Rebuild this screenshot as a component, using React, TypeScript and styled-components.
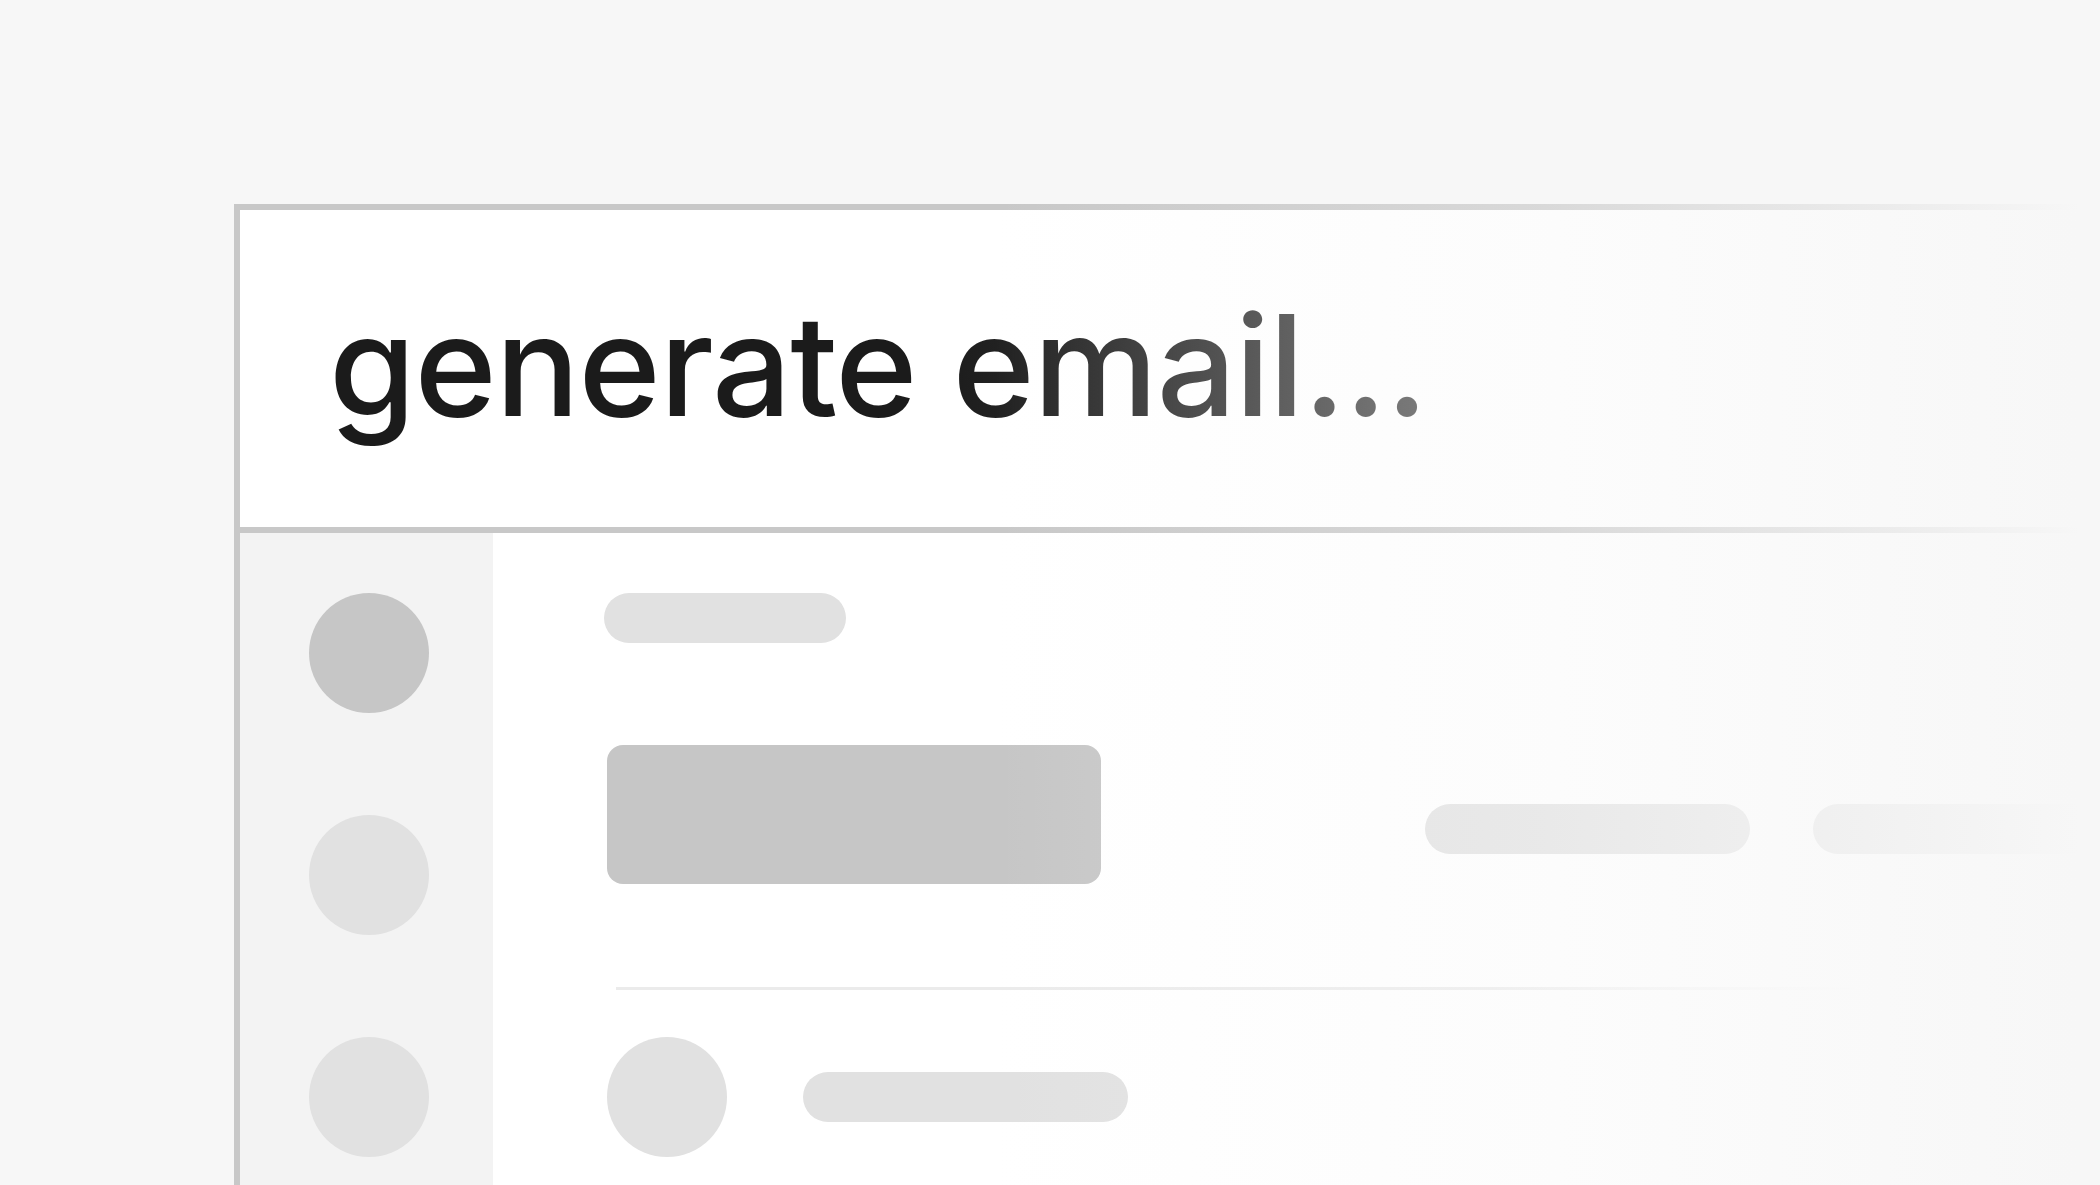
import React from 'react';
import styled, { createGlobalStyle } from 'styled-components';

const GlobalStyle = createGlobalStyle`
  *, *::before, *::after {
    box-sizing: border-box;
  }

  html, body {
    margin: 0;
    padding: 0;
    background-color: #f7f7f7;
  }

  body {
    font-family: Inter, "Liberation Sans", sans-serif;
  }
`;

const Page = styled.main`
  height: 1185px;
  overflow: hidden;
  padding: 204px 0 0 234px;
  background-color: #f7f7f7;
`;

const Frame = styled.section`
  position: relative;
  display: flex;
  flex-direction: column;
  width: 1866px;
  height: 981px;
  background-color: #ffffff;
  border-top: 6px solid #c8c8c8;
  border-left: 6px solid #c8c8c8;
`;

// soft fade of the whole window into the page on the right
const Fade = styled.div`
  position: absolute;
  top: -6px;
  right: 0;
  bottom: 0;
  left: -6px;
  pointer-events: none;
  background: linear-gradient(
    90deg,
    rgba(247, 247, 247, 0) 760px,
    rgba(247, 247, 247, 0.35) 1300px,
    rgba(247, 247, 247, 0.75) 1650px,
    #f7f7f7 1845px
  );
`;

const Header = styled.header`
  flex: none;
  height: 323px;
  padding: 65px 0 0 89px;
  border-bottom: 6px solid #c8c8c8;
`;

const Prompt = styled.h1`
  margin: 0;
  display: inline-block;
  font-family: Inter, "Liberation Sans", sans-serif;
  font-size: 140px;
  font-weight: 500;
  line-height: 180px;
  letter-spacing: -1.2px;
  background: linear-gradient(90deg, #1b1b1b 0%, #1b1b1b 55%, #4a4a4a 100%);
  -webkit-background-clip: text;
  background-clip: text;
  color: transparent;
`;

const Body = styled.div`
  flex: 1;
  display: flex;
  min-height: 0;
`;

const Sidebar = styled.aside`
  flex: none;
  width: 253px;
  display: flex;
  flex-direction: column;
  gap: 102px;
  padding: 60px 0 0 69px;
  background-color: #f3f3f3;
`;

const Avatar = styled.div<{ $tone?: 'dark' | 'light' }>`
  flex: none;
  width: 120px;
  height: 120px;
  border-radius: 50%;
  background-color: ${(p) => (p.$tone === 'dark' ? '#c6c6c6' : '#e1e1e1')};
`;

const Content = styled.div`
  flex: 1;
  display: flex;
  flex-direction: column;
  padding: 60px 0 0 111px;
`;

const Pill = styled.div<{ $width: number }>`
  flex: none;
  width: ${(p) => p.$width}px;
  height: 50px;
  border-radius: 25px;
  background-color: #e1e1e1;
`;

const Row = styled.div`
  display: flex;
  margin-top: 102px;
`;

const Block = styled.div`
  flex: none;
  width: 494px;
  height: 139px;
  margin-left: 3px;
  border-radius: 16px;
  background-color: #c6c6c6;
`;

const PillGroup = styled.div`
  display: flex;
  gap: 63px;
  margin-left: 324px;
  padding-top: 59px;
`;

const Rule = styled.hr`
  width: 1254px;
  height: 3px;
  margin: 103px 0 0 12px;
  border: 0;
  background: linear-gradient(90deg, #ebebeb 0%, #ebebeb 70%, rgba(235, 235, 235, 0) 100%);
`;

const ItemRow = styled.div`
  display: flex;
  align-items: center;
  gap: 76px;
  margin: 47px 0 0 3px;
`;

const App: React.FC = () => {
  return (
    <>
      <GlobalStyle />
      <Page>
        <Frame>
          <Header>
            <Prompt>generate email...</Prompt>
          </Header>
          <Body>
            <Sidebar>
              <Avatar $tone="dark" />
              <Avatar />
              <Avatar />
            </Sidebar>
            <Content>
              <Pill $width={242} />
              <Row>
                <Block />
                <PillGroup>
                  <Pill $width={325} />
                  <Pill $width={325} />
                </PillGroup>
              </Row>
              <Rule />
              <ItemRow>
                <Avatar />
                <Pill $width={325} />
              </ItemRow>
            </Content>
          </Body>
          <Fade />
        </Frame>
      </Page>
    </>
  );
};

export default App;
